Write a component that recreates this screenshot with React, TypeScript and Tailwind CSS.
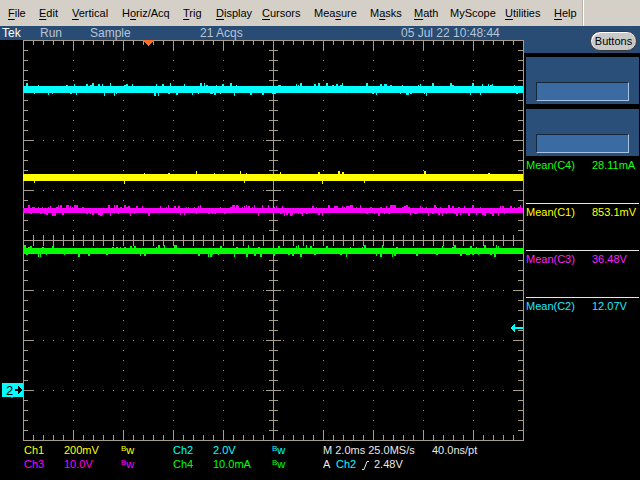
import { useMemo } from "react";

const GRAT = "#a69e8a";
const DOT = "#8c8c8c";

function rng(seed: number) {
  let s = seed;
  return () => {
    s = (s * 1103515245 + 12345) & 0x7fffffff;
    return s / 0x7fffffff;
  };
}

type Trace = { color: string; top: number; bottom: number; seed: number; density: number };

const TRACES: Trace[] = [
  { color: "#00ffff", top: 46, bottom: 53, seed: 7, density: 0.35 },
  { color: "#ffff00", top: 134, bottom: 141, seed: 19, density: 0.1 },
  { color: "#ff00ff", top: 168, bottom: 173, seed: 31, density: 0.55 },
  { color: "#00ff00", top: 208, bottom: 214, seed: 43, density: 0.3 },
];

function TraceBand({ t }: { t: Trace }) {
  const spikes = useMemo(() => {
    const r = rng(t.seed);
    const out: { x: number; y: number; h: number; w: number }[] = [];
    for (let x = 24; x < 522; x += 2) {
      if (r() < t.density) {
        const up = r() < 0.6;
        const h = 1 + Math.floor(r() * 3);
        const w = 1 + Math.floor(r() * 2);
        out.push({ x, y: up ? t.top - h : t.bottom, h, w });
      }
    }
    return out;
  }, [t]);
  return (
    <g fill={t.color}>
      <rect x={23} y={t.top} width={500} height={t.bottom - t.top} />
      {spikes.map((s, i) => (
        <rect key={i} x={s.x} y={s.y} width={s.w} height={s.h} />
      ))}
    </g>
  );
}

function Graticule() {
  const ticks: JSX.Element[] = [];
  // edge ticks, every 10px
  for (let i = 1; i < 50; i++) {
    const x = 23 + i * 10 + 0.5;
    const len = i % 5 === 0 ? 10 : 5;
    ticks.push(<line key={`t${i}`} x1={x} y1={0} x2={x} y2={len} />);
    ticks.push(<line key={`b${i}`} x1={x} y1={400} x2={x} y2={400 - len} />);
    // horizontal center line ticks
    ticks.push(<line key={`hc${i}`} x1={x} y1={195} x2={x} y2={206} />);
  }
  for (let j = 1; j < 40; j++) {
    const y = j * 10 + 0.5;
    const len = j % 5 === 0 ? 10 : 5;
    ticks.push(<line key={`l${j}`} x1={23} y1={y} x2={23 + len} y2={y} />);
    ticks.push(<line key={`r${j}`} x1={523} y1={y} x2={523 - len} y2={y} />);
    const half = j % 5 === 0 ? 7 : 4;
    ticks.push(<line key={`vc${j}`} x1={273 - half} y1={y} x2={273 + half + 1} y2={y} />);
  }
  const dots: JSX.Element[] = [];
  for (let k = 1; k < 10; k++) {
    if (k === 5) continue;
    const x = 23 + k * 50;
    for (let y = 10; y < 400; y += 10) {
      if (y % 50 === 0) continue;
      dots.push(<rect key={`dv${k}-${y}`} x={x} y={y} width={1} height={1} />);
    }
  }
  for (let m = 1; m < 8; m++) {
    if (m === 4) continue;
    const y = m * 50;
    for (let x = 33; x < 523; x += 10) {
      dots.push(<rect key={`dh${m}-${x}`} x={x} y={y} width={1} height={1} />);
    }
  }
  return (
    <>
      <g fill={DOT}>{dots}</g>
      <g stroke={GRAT} strokeWidth={1}>
        <rect x={23.5} y={0.5} width={500} height={400} fill="none" />
        <line x1={273.5} y1={0} x2={273.5} y2={400} />
        <line x1={23} y1={200.5} x2={523} y2={200.5} />
        {ticks}
      </g>
    </>
  );
}

function Scope() {
  return (
    <svg width={524} height={401} className="block" shapeRendering="crispEdges">
      <rect width={524} height={401} fill="#000" />
      <Graticule />
      {TRACES.map((t) => (
        <TraceBand key={t.seed} t={t} />
      ))}
      {/* trigger position */}
      <polygon points="143,0 154,0 148.5,6" fill="#ff6b22" />
      {/* trigger level arrow */}
      <g fill="#00ffff">
        <rect x={514} y={287} width={9} height={2} />
        <polygon points="510,288 515,284 515,292" />
      </g>
      {/* ch2 ground marker */}
      <rect x={2} y={343} width={21} height={14} fill="#00ffff" />
      <text x={6} y={355} fontSize={13} fill="#000" fontFamily="Liberation Sans, Arial, sans-serif">
        2
      </text>
      <g fill="#000">
        <rect x={15} y={349} width={7} height={2} />
        <polygon points="23,350 18,346 18,354" />
      </g>
      <rect x={11} y={357} width={2} height={1} fill="#ff00ff" />
    </svg>
  );
}

function Bw({ color }: { color: string }) {
  return (
    <span className={color}>
      <span className="relative top-[-3px] text-[8px]">B</span>
      <span className="text-[11px]">w</span>
    </span>
  );
}

function Readout() {
  return (
    <div className="flex flex-col pt-[3px] pl-[24px] text-[11px] leading-[13px]">
      <div className="flex whitespace-nowrap">
        <span className="w-[40px] text-[#ffff00]">Ch1</span>
        <span className="w-[57px] text-[#ffff00]">200mV</span>
        <span className="w-[52px]"><Bw color="text-[#ffff00]" /></span>
        <span className="w-[40px] text-[#00ffff]">Ch2</span>
        <span className="w-[59px] text-[#00ffff]">2.0V</span>
        <span className="w-[51px]"><Bw color="text-[#00ffff]" /></span>
        <span className="w-[109px] text-[#e8e8e8]">M 2.0ms 25.0MS/s</span>
        <span className="text-[#e8e8e8]">40.0ns/pt</span>
      </div>
      <div className="flex whitespace-nowrap">
        <span className="w-[40px] text-[#ff00ff]">Ch3</span>
        <span className="w-[57px] text-[#ff00ff]">10.0V</span>
        <span className="w-[52px]"><Bw color="text-[#ff00ff]" /></span>
        <span className="w-[40px] text-[#00ff00]">Ch4</span>
        <span className="w-[59px] text-[#00ff00]">10.0mA</span>
        <span className="w-[51px]"><Bw color="text-[#00ff00]" /></span>
        <span className="w-[13px] text-[#e8e8e8]">A</span>
        <span className="w-[26px] text-[#00ffff]">Ch2</span>
        <span className="flex w-[12px] items-center">
          <svg width={7} height={9} className="block">
            <path d="M0 8.5 H2 L5 0.5 H7" stroke="#e8e8e8" fill="none" />
          </svg>
        </span>
        <span className="text-[#e8e8e8]">2.48V</span>
      </div>
    </div>
  );
}

function Underline({ text, u }: { text: string; u: number }) {
  if (u < 0) return <>{text}</>;
  return (
    <>
      {text.slice(0, u)}
      <span className="underline underline-offset-2">{text[u]}</span>
      {text.slice(u + 1)}
    </>
  );
}

const MENU: { label: string; u: number; w: number }[] = [
  { label: "File", u: 0, w: 31 },
  { label: "Edit", u: 0, w: 33 },
  { label: "Vertical", u: 0, w: 50 },
  { label: "Horiz/Acq", u: 1, w: 61 },
  { label: "Trig", u: 0, w: 33 },
  { label: "Display", u: 0, w: 46 },
  { label: "Cursors", u: 0, w: 52 },
  { label: "Measure", u: 3, w: 56 },
  { label: "Masks", u: 1, w: 44 },
  { label: "Math", u: 0, w: 36 },
  { label: "MyScope", u: -1, w: 55 },
  { label: "Utilities", u: 0, w: 49 },
  { label: "Help", u: 0, w: 28 },
];

function MenuBar() {
  return (
    <div className="flex h-[26px] items-center bg-[#d4d0c8] pl-[8px] text-[11px] text-black">
      {MENU.map((m) => (
        <span key={m.label} className="shrink-0 whitespace-nowrap" style={{ width: m.w }}>
          <Underline text={m.label} u={m.u} />
        </span>
      ))}
      <div className="h-full w-[1px] bg-[#b8b4ac]" />
      <div className="h-full w-[1px] bg-white" />
    </div>
  );
}

function StatusBar() {
  return (
    <div className="flex h-[14px] items-center bg-[#284c74] text-[12px] leading-[14px] text-[#b9c4d3] whitespace-nowrap">
      <span className="w-[40px] pl-[2px] text-white">Tek</span>
      <span className="w-[50px]">Run</span>
      <span className="w-[110px]">Sample</span>
      <span className="w-[201px]">21 Acqs</span>
      <span>05 Jul 22 10:48:44</span>
    </div>
  );
}

function EmptySlot() {
  return (
    <div className="ml-[2px] h-[47px] w-[113px] bg-[#2a5079] pt-[25px] pl-[10px]">
      <div className="h-[19px] w-[93px] border-t border-l border-t-[#15263a] border-l-[#15263a] border-b border-r border-b-[#a9c3e0] border-r-[#a9c3e0] bg-[#3a6ca3]" />
    </div>
  );
}

const MEAS = [
  { label: "Mean(C4)", value: "28.11mA", color: "text-[#10ff10]" },
  { label: "Mean(C1)", value: "853.1mV", color: "text-[#ffff00]" },
  { label: "Mean(C3)", value: "36.48V", color: "text-[#ff20ff]" },
  { label: "Mean(C2)", value: "12.07V", color: "text-[#20e8ff]" },
];

function RightPanel() {
  return (
    <div className="flex w-[116px] flex-col bg-black">
      <div className="flex h-[27px] justify-end bg-[#284c74] pt-[5px] pr-[3px]">
        <div className="flex h-[20px] w-[47px] items-center justify-center rounded-[10px] border border-[#3a3a3a] bg-[#c9c9c9] text-[11px] text-black shadow-[inset_1px_1px_0_#ffffff]">
          Buttons
        </div>
      </div>
      <div className="h-[4px]" />
      <EmptySlot />
      <div className="h-[5px]" />
      <EmptySlot />
      <div className="flex flex-col pt-[3px] text-[11px] leading-[13px]">
        {MEAS.map((m, i) => (
          <div key={m.label} className="flex flex-col">
            {i > 0 && <div className="ml-[2px] mb-[2px] h-[1px] w-[113px] bg-[#e6e6e6]" />}
            <div className={`flex pl-[2px] ${m.color}`}>
              <span className="w-[66px]">{m.label}</span>
              <span>{m.value}</span>
            </div>
            <div className="h-[31px]" />
          </div>
        ))}
      </div>
    </div>
  );
}

export default function App() {
  return (
    <div className="flex h-[480px] w-[640px] flex-col overflow-hidden bg-black font-['Liberation_Sans',Arial,sans-serif]">
      <MenuBar />
      <div className="flex flex-1">
        <div className="flex w-[524px] flex-col">
          <StatusBar />
          <Scope />
          <Readout />
        </div>
        <RightPanel />
      </div>
    </div>
  );
}
